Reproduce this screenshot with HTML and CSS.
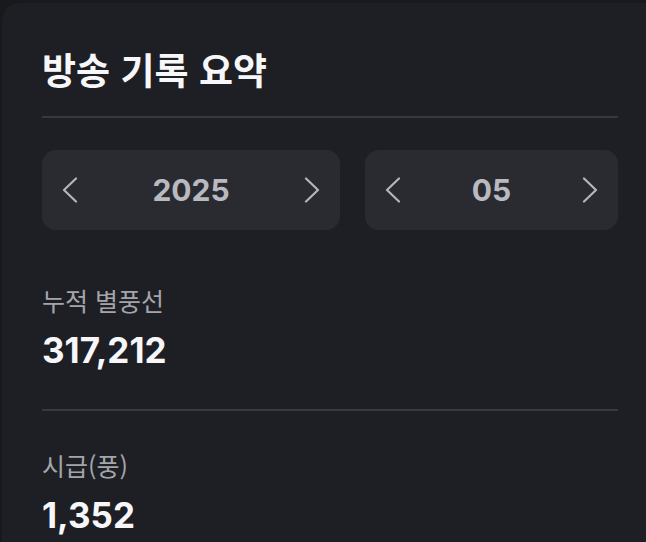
FILE: index.html
```html
<!DOCTYPE html>
<html lang="ko">
<head>
  <meta charset="UTF-8">
  <meta name="viewport" content="width=device-width, initial-scale=1.0">
  <title>방송 기록 요약</title>
  <link rel="stylesheet" href="styles.css">
</head>
<body>
  <div class="card">
    <h1 class="title">방송 기록 요약</h1>

    <!-- year / month pickers -->
    <div class="pickers">
      <div class="stepper stepper-year">
        <button class="arrow" aria-label="이전 연도">
          <svg width="16" height="26" viewBox="0 0 16 26"><polyline points="14,1.5 2,13 14,24.5"/></svg>
        </button>
        <span class="stepper-value">2025</span>
        <button class="arrow" aria-label="다음 연도">
          <svg width="16" height="26" viewBox="0 0 16 26"><polyline points="2,1.5 14,13 2,24.5"/></svg>
        </button>
      </div>
      <div class="stepper stepper-month">
        <button class="arrow" aria-label="이전 달">
          <svg width="16" height="26" viewBox="0 0 16 26"><polyline points="14,1.5 2,13 14,24.5"/></svg>
        </button>
        <span class="stepper-value">05</span>
        <button class="arrow" aria-label="다음 달">
          <svg width="16" height="26" viewBox="0 0 16 26"><polyline points="2,1.5 14,13 2,24.5"/></svg>
        </button>
      </div>
    </div>

    <!-- stats -->
    <div class="stat stat-first">
      <p class="stat-label">누적 별풍선</p>
      <p class="stat-value">317,212</p>
    </div>
    <div class="stat">
      <p class="stat-label">시급(풍)</p>
      <p class="stat-value">1,352</p>
    </div>
  </div>
</body>
</html>
```

FILE: styles.css
```css
body {
  margin: 0;
  background-color: #18191d;
  font-family: "Inter", "Noto Sans CJK KR", sans-serif;
  color: #f4f4f6;
  overflow: hidden;
}
.card {
  margin: 3px -20px 0 2px;
  padding: 0 48px 40px 40px;
  background-color: #1e1f24;
  border-radius: 18px 0 0 0;
  min-height: 560px;
}
.title {
  margin: 0;
  padding: 44px 0 25px;
  font-family: "Noto Sans CJK KR", sans-serif;
  font-size: 37px;
  font-weight: 700;
  line-height: 44px;
  color: #f7f7f9;
  border-bottom: 2px solid #38393e;
}
.pickers {
  display: flex;
  gap: 25px;
  margin-top: 32px;
}
.stepper {
  display: flex;
  align-items: center;
  justify-content: space-between;
  height: 80px;
  padding: 0 20px;
  background-color: #2a2b30;
  border-radius: 14px;
}
.stepper-year {
  flex: 0 0 298px;
  box-sizing: border-box;
}
.stepper-month {
  flex: 1;
}
.arrow {
  display: flex;
  padding: 0;
  background: none;
  border: none;
  cursor: pointer;
}
.arrow polyline {
  fill: none;
  stroke: #b5b6bb;
  stroke-width: 2.2;
  stroke-linecap: round;
  stroke-linejoin: round;
}
.stepper-value {
  font-size: 30px;
  font-weight: 700;
  color: #b9bac0;
}
.stat {
  padding: 38px 0 39px;
}
.stat-first {
  padding-top: 54px;
}
.stat + .stat {
  border-top: 2px solid #38393e;
}
.stat-label {
  margin: 0;
  font-family: "Noto Sans CJK KR", sans-serif;
  font-size: 25px;
  line-height: 32px;
  color: #a4a5aa;
}
.stat-value {
  margin: 14px 0 0;
  font-size: 35px;
  font-weight: 700;
  line-height: 40px;
  color: #f7f7f9;
}
```
